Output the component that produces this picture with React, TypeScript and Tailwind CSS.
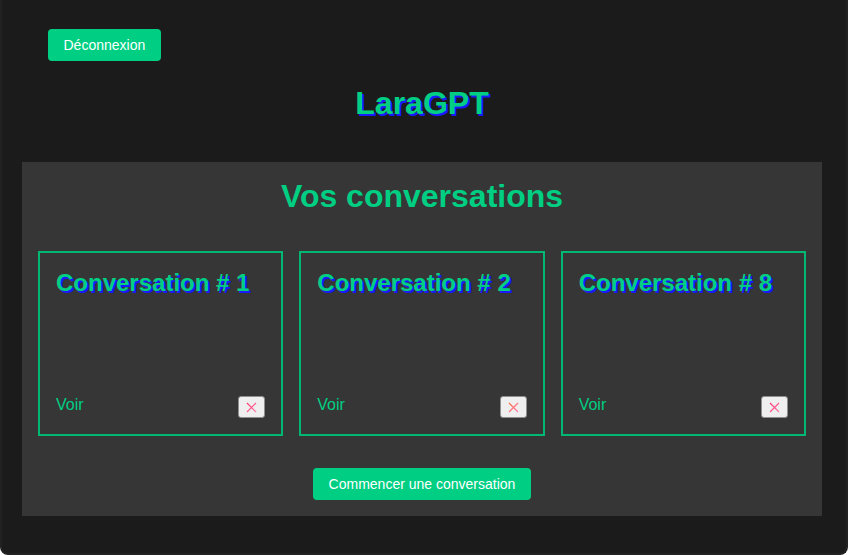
const conversations = [
  { id: 1, color: "#ff3b6b" },
  { id: 2, color: "#ff6a3d" },
  { id: 8, color: "#ff2f6d" },
];

function DeleteIcon({ color, id }: { color: string; id: number }) {
  return (
    <svg width="11" height="11" viewBox="0 0 11 11">
      <defs>
        <linearGradient id={`g${id}`} x1="0" y1="0" x2="1" y2="1">
          <stop offset="0" stopColor={color} />
          <stop offset="1" stopColor="#ff7ab0" />
        </linearGradient>
      </defs>
      <path d="M1 1 L10 10 M10 1 L1 10" stroke={`url(#g${id})`} strokeWidth="1.2" />
    </svg>
  );
}

export default function App() {
  return (
    <div
      className="h-[555px] w-[848px] bg-[#1b1b1b] border-x-2 border-b-2 border-[#222222] rounded-b-lg overflow-hidden"
      style={{ fontFamily: '"Liberation Sans", Arial, sans-serif' }}
    >
      <div className="px-[20px] pt-[29px]">
        <div className="pl-[26px]">
          <button className="h-[32px] px-[15.5px] rounded-[4px] bg-[#00cf83] text-white text-[14px]">
            Déconnexion
          </button>
        </div>

        <h1 className="mt-[24px] w-[800px] text-center text-[32px] leading-[37px] font-bold text-[#00cf83] [text-shadow:2px_2px_0_#1a1aff]">
          LaraGPT
        </h1>

        <section className="mt-[40px] w-[800px] bg-[#363636] px-[16px] pb-[16px]">
          <h2 className="pt-[16px] text-center text-[32px] leading-[37px] font-bold text-[#00cf83]">
            Vos conversations
          </h2>

          <div className="mt-[36px] grid grid-cols-3 gap-[16px]">
            {conversations.map((c) => (
              <div
                key={c.id}
                className="h-[185px] border-2 border-[#00b874] p-[16px] flex flex-col justify-between"
              >
                <h3 className="text-[24px] leading-[28px] font-bold text-[#00cf83] [text-shadow:2px_2px_0_#1a1aff]">
                  Conversation # {c.id}
                </h3>
                <div className="flex items-end justify-between">
                  <a className="text-[16px] leading-[18px] text-[#00cf83] mb-[4px] cursor-pointer">
                    Voir
                  </a>
                  <button className="h-[22px] w-[27px] flex items-center justify-center rounded-[3px] bg-[#efefef] border border-[#8f8f8f]">
                    <DeleteIcon color={c.color} id={c.id} />
                  </button>
                </div>
              </div>
            ))}
          </div>

          <div className="mt-[32px] flex justify-center">
            <button className="h-[32px] px-[16px] rounded-[4px] bg-[#00cf83] text-white text-[14px]">
              Commencer une conversation
            </button>
          </div>
        </section>
      </div>
    </div>
  );
}
